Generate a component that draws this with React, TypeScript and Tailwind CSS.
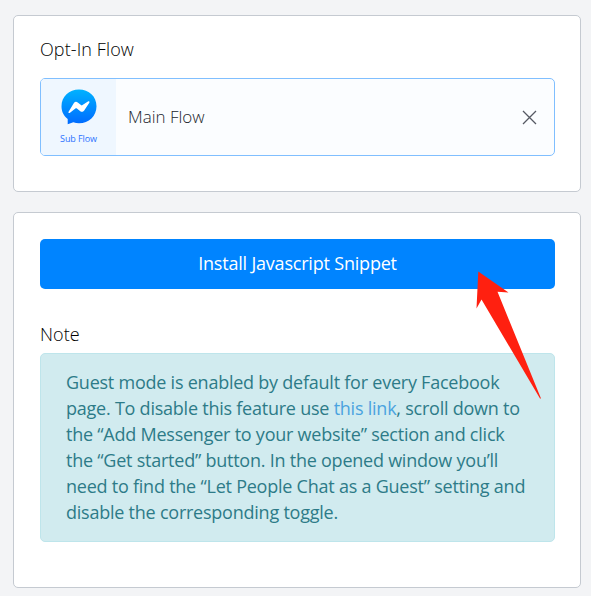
import React from "react";

function MessengerIcon() {
  return (
    <svg width="36" height="36" viewBox="0 0 36 36" aria-hidden="true">
      <defs>
        <linearGradient id="messenger" x1="0" y1="0" x2="0" y2="1">
          <stop offset="0" stopColor="#00b2ff" />
          <stop offset="1" stopColor="#006aff" />
        </linearGradient>
      </defs>
      <path
        d="M18 .5C8.100.5.5 7.700.5 17.200c0 5.400 2.300 9.800 6.200 12.800v5.300l5.600-2c1.800.600 3.700.900 5.700.900 9.900 0 17.500-7.200 17.500-17S27.900.5 18 .5z"
        fill="url(#messenger)"
      />
      <path
        d="M7.600 22.700l5.300-8.600c1-1.500 2.600-1.600 3.800-.600l3.300 2.600c.500.400 1 .400 1.500 0l5.400-3.500c1.100-.700 2 .200 1.400 1.200l-5.100 7.700c-1 1.500-2.700 1.700-3.900.700l-3.400-2.700c-.500-.400-1-.400-1.500 0L9 23.800c-1 .700-2-.100-1.400-1.100z"
        fill="#fff"
      />
    </svg>
  );
}

function Card({ className, children }: { className: string; children: React.ReactNode }) {
  return (
    <section className={`w-[568px] rounded-[5px] border border-[#c5cad1] bg-white pr-[25px] pl-[26px] ${className}`}>
      {children}
    </section>
  );
}

export default function App() {
  return (
    <main className="relative flex h-[596px] w-[591px] flex-col gap-5 overflow-hidden bg-[#f3f4f6] pt-[15px] pl-[13px] font-['Open_Sans',sans-serif]">
      <Card className="h-[177px] pt-5">
        <h2 className="h-[42px] text-lg leading-[27px] font-light tracking-[0.1px] text-black">Opt-In Flow</h2>
        <div className="flex h-[78px] overflow-hidden rounded-[5px] border border-[#80bfff] bg-[#fbfdff]">
          <div className="flex w-[75px] flex-col items-center bg-[#eff7ff] pt-[10px]">
            <MessengerIcon />
            <span className="mt-[6px] text-[9px] leading-4 tracking-[-0.1px] text-[#2b72ff]">Sub Flow</span>
          </div>
          <div className="flex flex-1 items-center justify-between pr-[17px] pl-[12px]">
            <span className="text-[17px] font-light text-[#22252c]">Main Flow</span>
            <svg width="15" height="15" viewBox="0 0 15 15" stroke="#555963" strokeWidth="1.3" aria-label="Remove">
              <path d="M1 1l13 13M14 1L1 14" />
            </svg>
          </div>
        </div>
      </Card>
      <Card className="h-[376px] pt-[26px]">
        <button className="block h-[50px] w-full rounded-[5px] bg-[#0084ff] pb-0.5 text-lg tracking-[-0.2px] text-white">
          Install Javascript Snippet
        </button>
        <h2 className="mt-8 h-8 text-lg leading-[27px] font-light tracking-[0.1px] text-black">Note</h2>
        <div className="h-[189px] rounded-[5px] border border-[#bee5eb] bg-[#d1ebef] px-[25px] pt-[15px] text-lg leading-[26px] tracking-[-0.235px] whitespace-nowrap text-[#2d7b88]">
          <p>Guest mode is enabled by default for every Facebook</p>
          <p>page. To disable this feature use <a className="text-[#4aa3df]">this link</a>, scroll down to</p>
          <p>the “Add Messenger to your website” section and click</p>
          <p>the “Get started” button. In the opened window you’ll</p>
          <p>need to find the “Let People Chat as a Guest” setting and</p>
          <p>disable the corresponding toggle.</p>
        </div>
      </Card>
      <svg className="absolute top-[270px] left-[474px]" width="70" height="132" viewBox="474 270 70 132" aria-hidden="true">
        <path d="M478.300 271.500L508.500 292.500L497.500 291.700L541 398.500L540 398.500L481.500 299.500L476.500 308.500Z" fill="#ff2010" />
      </svg>
    </main>
  );
}
